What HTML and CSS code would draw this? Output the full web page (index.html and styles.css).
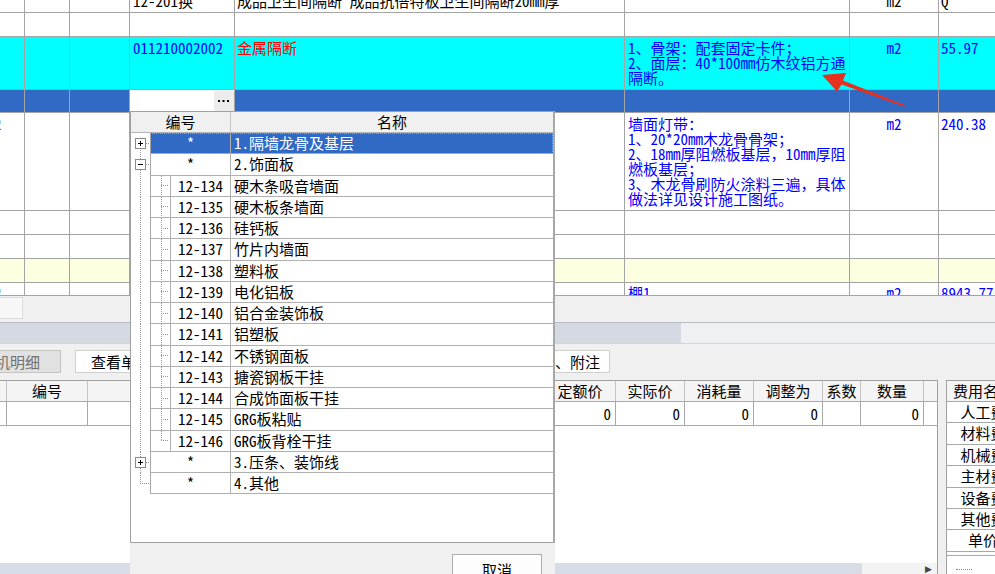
FILE: index.html
```html
<!DOCTYPE html>
<html lang="zh-CN">
<head>
<meta charset="utf-8">
<title>清单定额</title>
<link rel="stylesheet" href="styles.css">
</head>
<body>
<div class="app">
  <section class="top-grid">
    <div class="row r0">
      <div class="c w0"></div><div class="c w1"></div><div class="c w2"></div>
      <div class="c w3"><div class="up">12-201换</div></div>
      <div class="c w4"><div class="up">成品卫生间隔断 成品抗倍特板卫生间隔断20mm厚</div></div>
      <div class="c w5"></div>
      <div class="c w6"><div class="up">m2</div></div>
      <div class="c w7"><div class="up">Q</div></div>
    </div>
    <div class="row r1">
      <div class="c w0"></div><div class="c w1"></div><div class="c w2"></div><div class="c w3"></div>
      <div class="c w4"></div><div class="c w5"></div><div class="c w6"></div><div class="c w7"></div>
    </div>
    <div class="row r2">
      <div class="c w0"></div><div class="c w1"></div><div class="c w2"></div>
      <div class="c w3 pt blue">011210002002</div>
      <div class="c w4 pt red">金属隔断</div>
      <div class="c w5 pt blue">1、骨架：配套固定卡件；<br>2、面层：40*100mm仿木纹铝方通<br>隔断。</div>
      <div class="c w6 pt blue">m2</div>
      <div class="c w7 pt blue">55.97</div>
    </div>
    <div class="row r3">
      <div class="c w0"></div><div class="c w1"></div><div class="c w2"></div>
      <div class="c w3 editor">
        <span class="edit-field"></span>
        <span class="edit-btn"><svg width="19" height="20" viewBox="0 0 19 20"><rect x="4" y="9" width="2" height="2"/><rect x="8.5" y="9" width="2" height="2"/><rect x="13" y="9" width="2" height="2"/></svg></span>
      </div>
      <div class="c w4"></div><div class="c w5"></div><div class="c w6"></div><div class="c w7"></div>
    </div>
    <div class="row r4">
      <div class="c w0 pt"><span class="edge">2</span></div><div class="c w1"></div><div class="c w2"></div>
      <div class="c w3"></div>
      <div class="c w4"></div>
      <div class="c w5 pt blue">墙面灯带：<br>1、20*20mm木龙骨骨架；<br>2、18mm厚阻燃板基层，10mm厚阻<br>燃板基层；<br>3、木龙骨刷防火涂料三遍，具体<br>做法详见设计施工图纸。</div>
      <div class="c w6 pt blue">m2</div>
      <div class="c w7 pt blue">240.38</div>
    </div>
    <div class="row r5">
      <div class="c w0"></div><div class="c w1"></div><div class="c w2"></div><div class="c w3"></div>
      <div class="c w4"></div><div class="c w5"></div><div class="c w6"></div><div class="c w7"></div>
    </div>
    <div class="row r6">
      <div class="c w0"></div><div class="c w1"></div><div class="c w2"></div><div class="c w3"></div>
      <div class="c w4"></div><div class="c w5"></div><div class="c w6"></div><div class="c w7"></div>
    </div>
    <div class="row r7">
      <div class="c w0"></div><div class="c w1"></div><div class="c w2"></div><div class="c w3"></div>
      <div class="c w4"></div><div class="c w5"></div><div class="c w6"></div><div class="c w7"></div>
    </div>
    <div class="row r8">
      <div class="c w0 pt2"><span class="edge">2</span></div><div class="c w1"></div><div class="c w2"></div><div class="c w3"></div>
      <div class="c w4"></div>
      <div class="c w5 pt2 blue">棚1</div>
      <div class="c w6 pt2 blue">m2</div>
      <div class="c w7 pt2 blue">8943.77</div>
    </div>
  </section>

  <section class="band"><div class="tab"></div></section>
  <section class="bar"><div class="bar-fill"></div></section>

  <section class="toolbar">
    <button class="btn btn-dis">机明细</button>
    <button class="btn btn-view">查看单价构成</button>
    <button class="btn btn-note">备注、附注</button>
  </section>

  <section class="lower">
    <div class="ltable">
      <div class="lrow lhead">
        <div class="lc l0"></div><div class="lc l1">编号</div><div class="lc l2"></div>
        <div class="lc l3">定额价</div><div class="lc l4">实际价</div><div class="lc l5">消耗量</div>
        <div class="lc l6">调整为</div><div class="lc l7">系数</div><div class="lc l8">数量</div><div class="lc l9"></div>
      </div>
      <div class="lrow ldata">
        <div class="lc l0"></div><div class="lc l1"></div><div class="lc l2"></div>
        <div class="lc l3">0</div><div class="lc l4">0</div><div class="lc l5">0</div>
        <div class="lc l6">0</div><div class="lc l7"></div><div class="lc l8">0</div><div class="lc l9"></div>
      </div>
      <div class="lfill"></div>
      <div class="hscroll"><div class="thumb"></div><div class="track">&#9654;</div></div>
    </div>
    <div class="gap"></div>
    <div class="rpanel">
      <div class="rrow rhead">费用名称</div>
      <div class="rrow">人工费</div>
      <div class="rrow">材料费</div>
      <div class="rrow">机械费</div>
      <div class="rrow">主材费</div>
      <div class="rrow">设备费</div>
      <div class="rrow">其他费</div>
      <div class="rrow">单价</div>
      <div class="rdbl"></div>
      <div class="rdots"></div>
    </div>
  </section>

  <div class="dropdown">
    <div class="tree-box">
      <div class="t-head"><div class="th-code">编号</div><div class="th-name">名称</div></div>

      <div class="t-row">
        <div class="tree tb-first"><svg class="pm" width="11" height="11" viewBox="0 0 11 11"><rect x="0.5" y="0.5" width="10" height="10" fill="#fff" stroke="#8a8a8a"/><path d="M3 5.5h5M5.5 3v5" stroke="#000"/></svg></div>
        <div class="t-main is-sel"><div class="code">*</div><div class="name">1.隔墙龙骨及基层</div></div>
      </div>
      <div class="t-row">
        <div class="tree tb-mid"><svg class="pm" width="11" height="11" viewBox="0 0 11 11"><rect x="0.5" y="0.5" width="10" height="10" fill="#fff" stroke="#8a8a8a"/><path d="M3 5.5h5" stroke="#000"/></svg></div>
        <div class="t-main"><div class="code">*</div><div class="name">2.饰面板</div></div>
      </div>
      <div class="t-row"><div class="tree tl-v"></div><div class="t-main"><div class="ind il-v"></div><div class="code sub">12-134</div><div class="name">硬木条吸音墙面</div></div></div>
      <div class="t-row"><div class="tree tl-v"></div><div class="t-main"><div class="ind il-v"></div><div class="code sub">12-135</div><div class="name">硬木板条墙面</div></div></div>
      <div class="t-row"><div class="tree tl-v"></div><div class="t-main"><div class="ind il-v"></div><div class="code sub">12-136</div><div class="name">硅钙板</div></div></div>
      <div class="t-row"><div class="tree tl-v"></div><div class="t-main"><div class="ind il-v"></div><div class="code sub">12-137</div><div class="name">竹片内墙面</div></div></div>
      <div class="t-row"><div class="tree tl-v"></div><div class="t-main"><div class="ind il-v"></div><div class="code sub">12-138</div><div class="name">塑料板</div></div></div>
      <div class="t-row"><div class="tree tl-v"></div><div class="t-main"><div class="ind il-v"></div><div class="code sub">12-139</div><div class="name">电化铝板</div></div></div>
      <div class="t-row"><div class="tree tl-v"></div><div class="t-main"><div class="ind il-v"></div><div class="code sub">12-140</div><div class="name">铝合金装饰板</div></div></div>
      <div class="t-row"><div class="tree tl-v"></div><div class="t-main"><div class="ind il-v"></div><div class="code sub">12-141</div><div class="name">铝塑板</div></div></div>
      <div class="t-row"><div class="tree tl-v"></div><div class="t-main"><div class="ind il-v"></div><div class="code sub">12-142</div><div class="name">不锈钢面板</div></div></div>
      <div class="t-row"><div class="tree tl-v"></div><div class="t-main"><div class="ind il-v"></div><div class="code sub">12-143</div><div class="name">搪瓷钢板干挂</div></div></div>
      <div class="t-row"><div class="tree tl-v"></div><div class="t-main"><div class="ind il-v"></div><div class="code sub">12-144</div><div class="name">合成饰面板干挂</div></div></div>
      <div class="t-row"><div class="tree tl-v"></div><div class="t-main"><div class="ind il-v"></div><div class="code sub">12-145</div><div class="name">GRG板粘贴</div></div></div>
      <div class="t-row"><div class="tree tl-v"></div><div class="t-main"><div class="ind il-last"></div><div class="code sub">12-146</div><div class="name">GRG板背栓干挂</div></div></div>
      <div class="t-row">
        <div class="tree tb-mid"><svg class="pm" width="11" height="11" viewBox="0 0 11 11"><rect x="0.5" y="0.5" width="10" height="10" fill="#fff" stroke="#8a8a8a"/><path d="M3 5.5h5M5.5 3v5" stroke="#000"/></svg></div>
        <div class="t-main"><div class="code">*</div><div class="name">3.压条、装饰线</div></div>
      </div>
      <div class="t-row">
        <div class="tree tb-last"></div>
        <div class="t-main"><div class="code">*</div><div class="name">4.其他</div></div>
      </div>
    </div>
    <div class="dd-foot"><button class="btn-cancel">取消</button></div>
  </div>

  <svg class="annot" width="995" height="574" viewBox="0 0 995 574">
    <polygon points="822,75 846,73 843,80.6 905.4,105.2 904.6,106.8 841.6,84.6 837,91.5" fill="#e8301f"/>
  </svg>
</div>
</body>
</html>
```

FILE: styles.css
```css
* { box-sizing: border-box; }
html, body { margin: 0; padding: 0; }
body {
  width: 995px;
  height: 574px;
  overflow: hidden;
  background: #f0f0f0;
  font-family: "Noto Sans Mono CJK SC", "Noto Sans CJK SC", "Liberation Sans", sans-serif;
  font-size: 15px;
  color: #000;
}
.app {
  position: relative;
  width: 995px;
  height: 574px;
  overflow: hidden;
  display: flex;
  flex-direction: column;
}

/* ---------- top grid ---------- */
.top-grid { flex: none; height: 296px; background: #fff; overflow: hidden; }
.row { display: flex; border-bottom: 1px solid #a4a4a4; }
.r0 { height: 13px; }
.r1 { height: 24px; }
.r2 { height: 53px; background: #00ffff; }
.r3 { height: 23px; background: #316ac5; }
.r4 { height: 98px; }
.r5, .r6 { height: 24px; }
.r7 { height: 24px; background: #fefee1; }
.r8 { height: 13px; }
.c {
  flex: none;
  border-right: 1px solid #a4a4a4;
  overflow: hidden;
  white-space: nowrap;
  line-height: 15px;
}
.w0 { width: 25px; }
.w1 { width: 45px; }
.w2 { width: 60px; }
.w3 { width: 105px; padding-left: 3px; }
.w4 { width: 390px; padding-left: 2px; }
.w5 { width: 225px; padding-left: 3px; }
.w6 { width: 89px; text-align: center; }
.w7 { flex: 1; border-right: 0; padding-left: 2px; }
.up { margin-top: -7px; }
.pt { padding-top: 3px; }
.pt2 { padding-top: 2px; }
.blue { color: #0000ff; }
.red { color: #ff0000; }
.edge { display: inline-block; margin-left: -6px; color: #4060ff; }

.editor { display: flex; padding: 0; background: #fff; height: 21px; }
.edit-field { flex: 1; background: #fff; }
.edit-btn { flex: none; width: 20px; height: 20px; margin-top: 1px; background: #ececec; display: flex; }
.edit-btn svg { fill: #000; }

/* ---------- bands ---------- */
.band { flex: none; height: 26px; background: #f0f0f0; padding-top: 1px; }
.tab { width: 23px; height: 22px; background: #f7f7f7; border: 1px solid #dcdcdc; border-left: 0; }
.bar {
  flex: none;
  height: 22px;
  border-top: 1px solid #b8bcc4;
  border-bottom: 1px solid #cdd6e4;
  background: #eef0f4;
}
.bar-fill { width: 681px; height: 100%; background: #d5d9e1; }

.toolbar {
  flex: none;
  height: 36px;
  background: #f0f0f0;
  display: flex;
  align-items: flex-start;
  padding-top: 6px;
}
.btn {
  flex: none;
  height: 23px;
  border: 1px solid #cfcfcf;
  background: #fff;
  font: inherit;
  line-height: 21px;
  padding: 0;
  white-space: nowrap;
  overflow: hidden;
  color: #000;
}
.btn-dis {
  margin-left: -14px;
  width: 75px;
  text-align: left;
  padding-left: 8px;
  background: #e1e1e1;
  border-color: #c4c4c4;
  color: #707070;
}
.btn-view { margin-left: 14px; width: 120px; text-align: left; padding-left: 15px; }
.btn-note { margin-left: 321px; width: 94px; text-align: right; padding-right: 9px; }

/* ---------- lower area ---------- */
.lower { flex: 1; display: flex; min-height: 0; }
.ltable {
  flex: none;
  width: 938px;
  display: flex;
  flex-direction: column;
  background: #fff;
  border-right: 1px solid #a0a0a0;
}
.lrow { flex: none; display: flex; }
.lhead {
  height: 22px;
  border-top: 1px solid #a0a0a0;
  border-bottom: 1px solid #a8a8a8;
  background: #f4f4f4;
  line-height: 20px;
}
.ldata { height: 24px; border-bottom: 1px solid #a8a8a8; line-height: 23px; }
.lc {
  flex: none;
  border-right: 1px solid #c4c4c4;
  text-align: center;
  overflow: hidden;
  white-space: nowrap;
}
.ldata .lc { text-align: right; padding-right: 4px; border-right-color: #a8a8a8; }
.l0 { width: 7px; }
.l1 { width: 81px; }
.l2 { width: 457px; }
.l3 { width: 71px; }
.l4, .l5, .l6 { width: 69px; }
.l7 { width: 38px; }
.l8 { width: 63px; }
.l9 { flex: 1; border-right: 0; }
.lfill { flex: 1; }
.hscroll { flex: none; height: 11px; display: flex; }
.thumb { width: 862px; background: #d8dce6; }
.track {
  flex: 1;
  background: #f3f3f3;
  text-align: right;
  padding-right: 5px;
  font: 9px/12px "DejaVu Sans", sans-serif;
  color: #444;
}
.gap { flex: none; width: 8px; background: #f0f0f0; }
.rpanel { flex: 1; background: #fff; border-left: 1px solid #a0a0a0; overflow: hidden; }
.rrow {
  width: 72px;
  height: 21.4px;
  border-bottom: 1px solid #a8a8a8;
  text-align: center;
  line-height: 20px;
  white-space: nowrap;
}
.rhead { height: 22px; border-top: 1px solid #a0a0a0; background: #f4f4f4; }
.rdbl { width: 72px; height: 4px; border-bottom: 1px solid #a8a8a8; }
.rdots { width: 16px; margin: 13px 0 0 9px; border-top: 1px dotted #8a8a8a; }

/* ---------- dropdown tree ---------- */
.dropdown {
  position: absolute;
  left: 130px;
  top: 111px;
  width: 425px;
  height: 463px;
  display: flex;
  flex-direction: column;
  background: #f0f0f0;
  z-index: 5;
}
.tree-box {
  flex: none;
  height: 432px;
  background: #fff;
  border: 1px solid #a0a0a0;
  border-right: 2px solid #a8a8a8;
  display: flex;
  flex-direction: column;
}
.t-head {
  flex: none;
  display: flex;
  height: 21px;
  background: #f0f0f0;
  border-bottom: 1px solid #b4b4b4;
  line-height: 20px;
}
.th-code { width: 100px; text-align: center; border-right: 1px solid #c8c8c8; }
.th-name { flex: 1; text-align: center; }
.t-row { flex: none; display: flex; height: 21.25px; }
.tree {
  flex: none;
  width: 19px;
  display: flex;
  align-items: center;
  padding-left: 4px;
}
.pm { display: block; }
.t-main {
  flex: 1;
  display: flex;
  border-left: 1px solid #a8a8a8;
  border-bottom: 1px solid #b0b0b0;
  line-height: 20px;
  white-space: nowrap;
}
.code { flex: none; width: 80px; text-align: center; border-right: 1px solid #b0b0b0; }
.code.sub { width: 60px; }
.ind { flex: none; width: 20px; border-right: 1px solid #b0b0b0; }
.name { flex: 1; padding-left: 3px; overflow: hidden; }
.is-sel {
  background: #316ac5;
  color: #fff;
  outline: 1px dotted #c9a25a;
  outline-offset: -1px;
}

/* dotted tree connectors */
.tb-first {
  background:
    repeating-linear-gradient(to bottom, #999 0 1px, transparent 1px 2px) 9px 100% / 1px 50% no-repeat,
    repeating-linear-gradient(to right, #999 0 1px, transparent 1px 2px) 9px 50% / 10px 1px no-repeat;
}
.tb-mid {
  background:
    repeating-linear-gradient(to bottom, #999 0 1px, transparent 1px 2px) 9px 0 / 1px 100% no-repeat,
    repeating-linear-gradient(to right, #999 0 1px, transparent 1px 2px) 9px 50% / 10px 1px no-repeat;
}
.tl-v {
  background: repeating-linear-gradient(to bottom, #999 0 1px, transparent 1px 2px) 9px 0 / 1px 100% no-repeat;
}
.tb-last {
  background:
    repeating-linear-gradient(to bottom, #999 0 1px, transparent 1px 2px) 9px 0 / 1px 50% no-repeat,
    repeating-linear-gradient(to right, #999 0 1px, transparent 1px 2px) 9px 50% / 10px 1px no-repeat;
}
.il-v {
  background:
    repeating-linear-gradient(to bottom, #999 0 1px, transparent 1px 2px) 10px 0 / 1px 100% no-repeat,
    repeating-linear-gradient(to right, #999 0 1px, transparent 1px 2px) 10px 50% / 8px 1px no-repeat;
}
.il-last {
  background:
    repeating-linear-gradient(to bottom, #999 0 1px, transparent 1px 2px) 10px 0 / 1px 50% no-repeat,
    repeating-linear-gradient(to right, #999 0 1px, transparent 1px 2px) 10px 50% / 8px 1px no-repeat;
}

.dd-foot { flex: 1; padding: 11px 0 0 322px; overflow: hidden; }
.btn-cancel {
  display: block;
  width: 90px;
  height: 26px;
  border: 1px solid #adadad;
  background: #fdfdfd;
  font: inherit;
  color: #000;
  padding: 5px 0 0;
  line-height: 20px;
  text-align: center;
}

.annot { position: absolute; left: 0; top: 0; pointer-events: none; z-index: 10; }
```
